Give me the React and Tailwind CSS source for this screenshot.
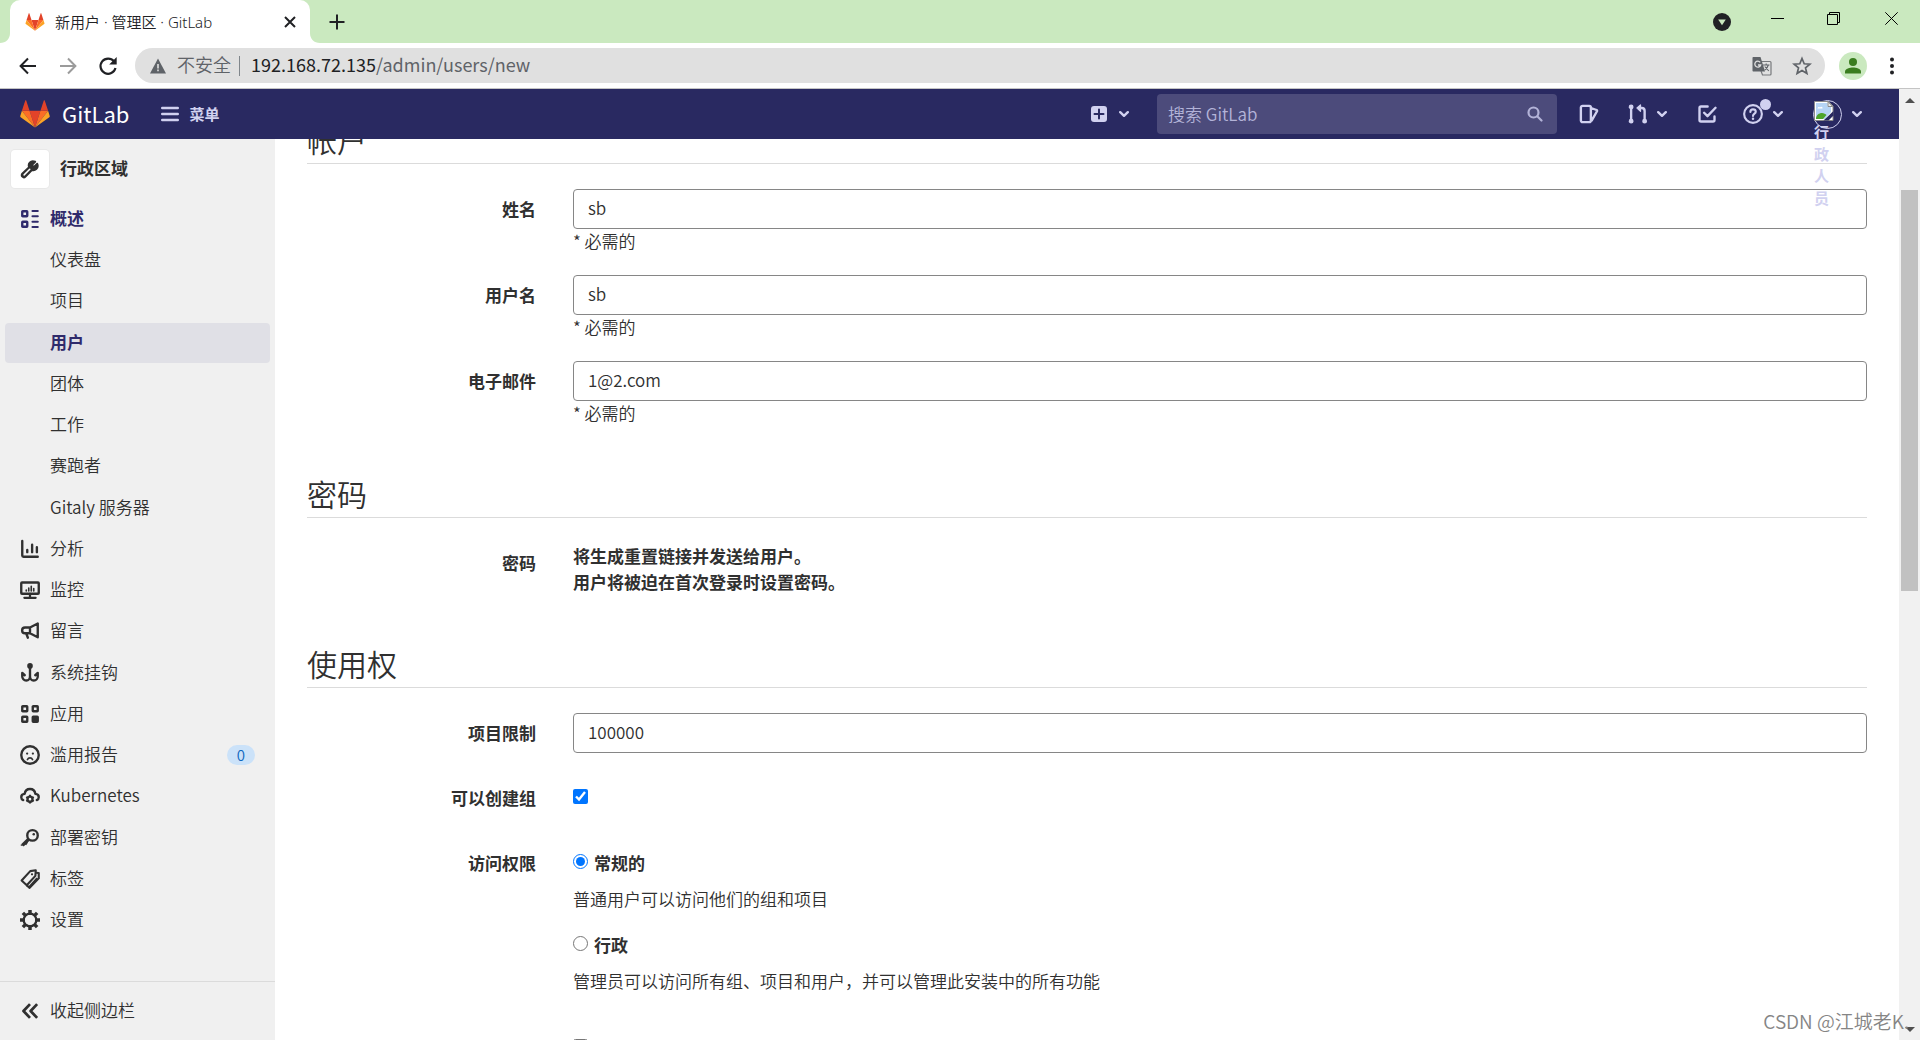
import React from "react";

const FONT = "font-['Noto_Sans_CJK_SC',sans-serif]";

function Icon({ size = "size-5", children, ...rest }) {
  return (
    <svg viewBox="0 0 16 16" className={`${size} shrink-0`} fill="none" stroke="currentColor" strokeWidth="1.9" strokeLinejoin="round" aria-hidden="true" {...rest}>
      {children}
    </svg>
  );
}

function Tanuki({ className }) {
  return (
    <svg viewBox="0 0 36 34" className={className} aria-hidden="true">
      <path fill="#e24329" d="m18 33.5 6.6-20.4H11.4z" />
      <path fill="#fc6d26" d="m18 33.5-6.6-20.4H2.1z" />
      <path fill="#fca326" d="M2.1 13.1.1 19.3c-.2.6 0 1.2.5 1.5L18 33.5z" />
      <path fill="#e24329" d="M2.1 13.1h9.3L7.4.8c-.2-.6-1.100-.6-1.300 0z" />
      <path fill="#fc6d26" d="m18 33.5 6.600-20.400h9.300z" />
      <path fill="#fca326" d="m33.900 13.100 2 6.200c.2.600 0 1.200-.5 1.500L18 33.500z" />
      <path fill="#e24329" d="M33.900 13.100h-9.300l4-12.300c.2-.6 1.100-.6 1.300 0z" />
    </svg>
  );
}

function Chevron() {
  return (
    <svg viewBox="0 0 10 10" className="size-[10px] shrink-0" fill="none" stroke="currentColor" strokeWidth="2.4" strokeLinecap="round" strokeLinejoin="round" aria-hidden="true">
      <path d="m1.200 3.200 3.800 3.600 3.800-3.600" />
    </svg>
  );
}

const gearTeeth = "M8 0v3M8 13v3M0 8h3M13 8h3M2.300 2.300l2.200 2.200M11.500 11.500l2.200 2.200M2.300 13.700l2.200-2.200M11.500 4.500l2.200-2.200";

const icons = {
  overview: (
    <Icon>
      <rect x="1.800" y="1.800" width="4" height="4" rx=".4" />
      <rect x="1.800" y="10.200" width="4" height="4" rx=".4" />
      <path strokeLinecap="round" d="M10 1.600h4.200M10 5.800h4.200M10 10.200h4.200M10 14.400h4.200" strokeWidth="1.700" />
    </Icon>
  ),
  analytics: (
    <Icon strokeLinecap="round">
      <path d="M1.800 1.500v11.700c0 .600.400 1 1 1h11.400M5.800 8.800v1.700M9.700 4.500v6M13.500 6.500v4" />
    </Icon>
  ),
  monitor: (
    <Icon>
      <rect x="1" y="2" width="14" height="9" rx=".6" />
      <path d="M8 11v2.500M3.500 14.200h9" strokeWidth="1.800" strokeLinecap="round" />
      <path d="M5 8.800V8M7 8.800V6.500M9 8.800V5M11 8.800V6.800" strokeWidth="1.300" strokeLinecap="round" />
    </Icon>
  ),
  bullhorn: (
    <Icon>
      <path d="M8 5.200 14.200 2v11L8 9.800zM8 5.200H4C2.500 5.200 1.700 6.200 1.700 7.500S2.500 9.800 4 9.800h4zM5 10l1.300 3.400" strokeLinecap="round" />
    </Icon>
  ),
  hook: (
    <Icon strokeLinecap="round">
      <circle cx="8" cy="2.300" r="1.300" fill="currentColor" />
      <path d="M8 3v7.500c0 2-1.100 3.500-3 3.500s-3.200-1.500-3.200-3.500V8l2 1.800M8 10.500c0 2 1.100 3.500 3 3.500s3.200-1.500 3.200-3.500V8l-2 1.800" />
    </Icon>
  ),
  applications: (
    <Icon>
      <rect x="1.800" y="1.800" width="4" height="4" rx=".4" />
      <rect x="10.200" y="1.800" width="4" height="4" rx=".4" />
      <rect x="1.800" y="10.200" width="4" height="4" rx=".4" />
      <rect x="10.200" y="10.200" width="4" height="4" rx=".4" fill="currentColor" />
    </Icon>
  ),
  frown: (
    <Icon>
      <circle cx="8" cy="8" r="7" />
      <circle cx="5.700" cy="6.800" r=".9" fill="currentColor" stroke="none" />
      <circle cx="10.300" cy="6.800" r=".9" fill="currentColor" stroke="none" />
      <path d="M6 11.600c.4-.9 1.100-1.300 2-1.300s1.600.4 2 1.300" strokeWidth="1.400" strokeLinecap="round" />
    </Icon>
  ),
  cloud: (
    <Icon>
      <path d="M2.600 11.300C1.500 10.800 1 9.900 1 8.900c0-1.500 1.200-2.500 2.700-2.600C4.100 3.700 5.800 2.400 8 2.400s3.900 1.300 4.300 3.900c1.500.100 2.700 1.100 2.700 2.600 0 1-.5 1.900-1.600 2.400" strokeLinecap="round" />
      <circle cx="8" cy="10.500" r="2" />
      <path d="M8 7v1.500M8 12.500V14M5 8.800l1.200.7M9.800 11.500l1.200.7M5 12.200l1.200-.7M9.800 9.500l1.200-.7" strokeWidth="1.600" />
    </Icon>
  ),
  key: (
    <Icon>
      <circle cx="10" cy="5.900" r="4.200" />
      <circle cx="11" cy="5" r="1" fill="currentColor" stroke="none" />
      <path d="M6.900 9 2 13.800M1.900 13.200v1M4 11.500l1.700 1.200" strokeWidth="2.600" />
    </Icon>
  ),
  labels: (
    <Icon strokeWidth="1.700">
      <path d="M1.300 9.200 8.200 1.700 12.600 1l-.3 4.500L5.400 13z" />
      <path d="m12.600 3 2.400.2v4.300l-7.300 7.600L5.300 13" />
      <circle cx="9.600" cy="4.200" r=".9" fill="currentColor" stroke="none" />
      <path d="m7.300 14.500 6.500-7.200" />
    </Icon>
  ),
  settings: (
    <Icon>
      <circle cx="8" cy="8" r="5" strokeWidth="2" />
      <path d={gearTeeth} strokeWidth="2.800" />
      <circle cx="8" cy="8" r="4" fill="#f0f0f0" stroke="none" />
    </Icon>
  ),
};

const navItems = [
  { label: "概述", icon: "overview", active: true },
  { label: "仪表盘" },
  { label: "项目" },
  { label: "用户", current: true },
  { label: "团体" },
  { label: "工作" },
  { label: "赛跑者" },
  { label: "Gitaly 服务器" },
  { label: "分析", icon: "analytics" },
  { label: "监控", icon: "monitor" },
  { label: "留言", icon: "bullhorn" },
  { label: "系统挂钩", icon: "hook" },
  { label: "应用", icon: "applications" },
  { label: "滥用报告", icon: "frown", badge: "0" },
  { label: "Kubernetes", icon: "cloud" },
  { label: "部署密钥", icon: "key" },
  { label: "标签", icon: "labels" },
  { label: "设置", icon: "settings" },
];

function TabStrip() {
  return (
    <div className="flex h-[43px] shrink-0 bg-[#cae9bf]">
      <svg viewBox="0 0 10 10" className="size-[10px] self-end" fill="#fff" aria-hidden="true"><path d="M10 0v10H0C6 10 10 6 10 0z" /></svg>
      <div className="flex w-[300px] items-center rounded-t-[10px] bg-white pl-[15px] pr-[13px] text-[#202124]">
        <Tanuki className="h-[18px] w-5 shrink-0" />
        <span className="ml-[10px] flex-1 truncate font-['Noto_Sans','Noto_Sans_CJK_SC',sans-serif] text-[15px] leading-6">新用户 · 管理区 · GitLab</span>
        <button type="button" aria-label="关闭标签页">
          <svg viewBox="0 0 14 14" className="size-[14px]" fill="none" stroke="currentColor" strokeWidth="2"><path d="m2 2 10 10M12 2 2 12" /></svg>
        </button>
      </div>
      <svg viewBox="0 0 10 10" className="size-[10px] self-end" fill="#fff" aria-hidden="true"><path d="M0 0v10h10C4 10 0 6 0 0z" /></svg>
      <button type="button" aria-label="新标签页" className="ml-[9px] text-[#202124]">
        <svg viewBox="0 0 16 16" className="size-4" fill="none" stroke="currentColor" strokeWidth="2"><path d="M8 .5v15M.5 8h15" /></svg>
      </button>
      <div className="ml-auto flex items-start gap-[43px] pr-[22px] pt-3 text-black">
        <button type="button" aria-label="搜索标签页" className="-mr-[3px] pt-px">
          <svg viewBox="0 0 18 18" className="size-[18px]"><circle cx="9" cy="9" r="9" fill="#202124" /><path d="M5.200 6.500h7.600L9 12.300z" fill="#cae9bf" /></svg>
        </button>
        <button type="button" aria-label="最小化">
          <svg viewBox="0 0 13 13" className="size-[13px]" stroke="currentColor"><path d="M0 6.500h13" /></svg>
        </button>
        <button type="button" aria-label="还原">
          <svg viewBox="0 0 13 13" className="size-[13px]" stroke="currentColor" fill="none"><path d="M.5 2.500h10v10H.5zM2.500 2.500v-2h10v10h-2" /></svg>
        </button>
        <button type="button" aria-label="关闭" className="ml-0.5">
          <svg viewBox="0 0 13 13" className="size-[13px]" stroke="currentColor" fill="none"><path d="m.3.300 12.400 12.400M12.700.300.3 12.700" /></svg>
        </button>
      </div>
    </div>
  );
}

function AddressBar() {
  return (
    <div className="flex h-[46px] shrink-0 items-center border-b border-[#c4c4c4] bg-white pl-[18px] pr-6 text-[#202124]">
      <button type="button" aria-label="后退">
        <svg viewBox="0 0 20 20" className="size-5" fill="none" stroke="currentColor" strokeWidth="2"><path d="M18 10H3M10 2.500 2.600 10l7.400 7.500" /></svg>
      </button>
      <button type="button" aria-label="前进" className="ml-5 text-[#9b9b9b]">
        <svg viewBox="0 0 20 20" className="size-5" fill="none" stroke="currentColor" strokeWidth="2"><path d="M2 10h15M10 2.500l7.400 7.500-7.400 7.500" /></svg>
      </button>
      <button type="button" aria-label="重新加载" className="ml-5">
        <svg viewBox="0 0 20 20" className="size-5" fill="none" stroke="currentColor" strokeWidth="2.200"><path d="M16 5.300A7.600 7.600 0 1 0 17.500 12" /><path d="M18.700 1v7.500h-7.500z" fill="currentColor" stroke="none" /></svg>
      </button>
      <div className="ml-[17px] flex h-[35px] flex-1 items-center rounded-full bg-[#e0e0e0] pl-[15px] pr-[13px] text-[18px] leading-6 text-[#5f6368]">
        <svg viewBox="0 0 16 16" className="size-4" fill="currentColor"><path d="M8 .5 16 15.500H0z" /><path d="M7.200 6h1.600v4.500H7.200zM7.200 11.500h1.600v1.700H7.200z" fill="#e0e0e0" /></svg>
        <span className="ml-[11px] pb-[3px]">不安全</span>
        <span className="ml-2 h-5 w-px bg-[#80868b]" />
        <span role="textbox" aria-label="地址" className="ml-[11px] flex-1 pb-[3px] font-normal"><span className="text-[#202124]">192.168.72.135</span>/admin/users/new</span>
        <button type="button" aria-label="翻译此页">
          <svg viewBox="0 0 20 20" className="size-5" fill="none">
            <path d="M9 5.500h9c.6 0 1 .4 1 1V18c0 .6-.4 1-1 1h-7.500L9 15" stroke="#77797c" strokeWidth="1.200" />
            <path d="M1.500 1h7L13 15.500H1.500c-.6 0-1-.4-1-1V2c0-.6.4-1 1-1z" fill="#5f6368" />
            <path d="M8.200 6.300A3 3 0 1 0 8.700 9H6" stroke="#e0e0e0" strokeWidth="1.300" />
            <path d="M11 9h6.500M14.200 7.500V9M16.300 9c-.6 2.200-2 4-3.500 5M12.800 10.500l4 4.500" stroke="#5f6368" strokeWidth="1.100" />
          </svg>
        </button>
        <button type="button" aria-label="添加书签" className="ml-5">
          <svg viewBox="0 0 20 20" className="size-5" fill="none" stroke="currentColor" strokeWidth="1.700"><path d="m10 2.500 2.200 5.300 5.700.4-4.400 3.700 1.400 5.600-4.900-3-4.900 3 1.400-5.600L2.100 8.200l5.700-.4z" /></svg>
        </button>
      </div>
      <button type="button" aria-label="用户资料" className="ml-[14px] flex size-7 items-center justify-center rounded-full bg-[#cae9bf]">
        <svg viewBox="0 0 16 16" className="size-4" fill="#3a7d1f"><circle cx="8" cy="4" r="4" /><path d="M0 15.500v-2C0 10.800 5 9.600 8 9.600s8 1.200 8 3.900v2z" /></svg>
      </button>
      <button type="button" aria-label="菜单" className="ml-[21px]">
        <svg viewBox="0 0 8 18" className="h-[18px] w-2" fill="currentColor"><circle cx="4" cy="2.500" r="2" /><circle cx="4" cy="9" r="2" /><circle cx="4" cy="15.500" r="2" /></svg>
      </button>
    </div>
  );
}

function NavBar() {
  return (
    <header className="relative z-10 flex h-[50px] shrink-0 items-center bg-[#292961] pl-5 pr-[37px] text-[#d1d1f0]">
      <a href="#home" className="flex items-center text-white">
        <Tanuki className="h-[28px] w-[30px]" />
        <span className="ml-3 pb-0.5 text-[22px] font-normal leading-8">GitLab</span>
      </a>
      <button type="button" className="ml-8 flex items-center gap-[10px] text-[15px] font-bold leading-6">
        <svg viewBox="0 0 18 16" className="h-4 w-[18px]" stroke="currentColor" strokeWidth="2.400" strokeLinecap="round"><path d="M1.200 2h15.600M1.200 8h15.600M1.200 14h15.600" /></svg>
        菜单
      </button>
      <button type="button" aria-label="新建" className="ml-auto flex items-center gap-3">
        <svg viewBox="0 0 16 16" className="size-4"><rect width="16" height="16" rx="3" fill="currentColor" /><path d="M8 3.500v9M3.500 8h9" stroke="#292961" strokeWidth="2" strokeLinecap="round" /></svg>
        <Chevron />
      </button>
      <label className="ml-7 flex h-10 w-[400px] items-center rounded-[4px] bg-[#4c4b7b] pl-[11px] pr-[14px] text-[#b3b3d8]">
        <input type="text" aria-label="搜索" placeholder="搜索 GitLab" className="min-w-0 flex-1 bg-transparent text-[17px] leading-6 outline-none placeholder:text-[#b3b3d8]" />
        <Icon size="size-4" strokeWidth="2.200" strokeLinecap="round"><circle cx="6.500" cy="6.500" r="5" /><path d="m10.500 10.500 4 4" /></Icon>
      </label>
      <a href="#issues" aria-label="议题" className="ml-[22px]">
        <Icon><path d="M2.800 1.500h5.400c.7 0 1.300.6 1.300 1.300v10.400c0 .7-.6 1.300-1.300 1.300H2.800c-.7 0-1.300-.6-1.300-1.300V2.800c0-.7.600-1.300 1.300-1.300zM9.700 3.200l4.300 1.600c.4.100.6.600.4 1L10 13.500" /></Icon>
      </a>
      <button type="button" aria-label="合并请求" className="ml-[29px] flex items-center gap-[9px]">
        <Icon><circle cx="2.500" cy="2.300" r="1" fill="currentColor" /><circle cx="2.500" cy="13.700" r="1" fill="currentColor" /><path d="M2.500 3v10" /><path d="M9 3.200h2c1.300 0 2.300 1 2.300 2.300V13" /><circle cx="13.300" cy="13.700" r="1" fill="currentColor" /><path d="M10 .8v5L7.200 3.200z" fill="currentColor" strokeWidth="1" /></Icon>
        <Chevron />
      </button>
      <a href="#todos" aria-label="待办事项" className="ml-[30px]">
        <Icon strokeLinecap="round"><path d="M8.500 2H3.200C2.500 2 2 2.500 2 3.200v9.600c0 .7.500 1.200 1.200 1.200h9.600c.7 0 1.200-.5 1.200-1.200V10M5.700 7l2.700 2.700L14.800 3" /></Icon>
      </a>
      <button type="button" aria-label="帮助" className="relative ml-[26px] flex items-center gap-[10px]">
        <Icon strokeWidth="1.700"><circle cx="8" cy="8" r="7.100" /><path d="M5.900 6.300c0-1.200.9-2 2.100-2s2.200.8 2.200 1.900C10.200 7.700 8 7.800 8 9.500" strokeLinecap="round" /><circle cx="8" cy="11.800" r="1" fill="currentColor" stroke="none" /></Icon>
        <span className="absolute -top-[5px] left-[17px] size-[11px] rounded-full bg-[#d1d1f0]" />
        <Chevron />
      </button>
      <button type="button" aria-label="用户菜单" className="ml-[30px] flex items-center gap-[10px]">
        <span className="relative size-[29px] rounded-full border border-[#d1d1f0]">
          <svg viewBox="0 0 20 20" className="absolute left-0 top-0 size-5">
            <path d="M.5.500h14L19 5v14.500H.5z" fill="#fff" stroke="#8a8a8a" />
            <path d="M2 2h11.500v3.500H17V11l-6 7H2z" fill="#b6d4f5" />
            <path d="M3.500 7.500c0-1.500 2-2 2.500-1 1-1.500 3-.5 2.500 1z" fill="#fff" />
            <path d="M2 18c0-4 3-6 6-6 2 0 3.500 1 4.500 2L9 18z" fill="#4ea52c" />
            <path d="M19.500 10 9.500 19.500h5l5-5z" fill="#292961" />
            <path d="M14 .8V5.500h4.700z" fill="#eee" stroke="#8a8a8a" />
          </svg>
          <span className="absolute left-0 top-5 w-[15px] break-all text-[15px] font-bold leading-[22px]">行政人员</span>
        </span>
        <Chevron />
      </button>
    </header>
  );
}

function Sidebar() {
  return (
    <nav aria-label="管理区" className="flex w-[275px] shrink-0 flex-col bg-[#f0f0f0] text-[17px] leading-6 text-[#303030]">
      <a href="#admin" className="flex items-center py-[11px] pl-[11px] font-bold">
        <span className="flex size-[38px] items-center justify-center rounded-[4px] bg-white shadow-[0_0_0_1px_#e8e8e8]">
          <Icon><path d="M13.800 3.800 11.500 6 10 5.800 9.900 4.400l2.200-2.200C10.500 1.500 8.800 1.800 7.800 3 6.900 4 6.800 5.300 7.300 6.500L2 11.600c-.8.800-.8 1.800-.1 2.500s1.700.7 2.500-.1L9.500 8.800c1.200.4 2.500.2 3.500-.7 1.100-1.100 1.400-2.800.8-4.300z" strokeWidth="1.600" fill="currentColor" /><path d="m7.800 8.200-4.500 4.500" strokeWidth="1.200" strokeLinecap="round" stroke="#fff" /></Icon>
        </span>
        <span className="ml-[11px] pb-0.5">行政区域</span>
      </a>
      <ul className="mb-[41px] flex flex-1 flex-col justify-between">
        {navItems.map((item) => (
          <li key={item.label} className="px-[5px]">
            <a
              href={`#${item.label}`}
              className={
                item.current
                  ? "flex h-10 items-center rounded-[4px] bg-[#e0e0e6] pl-[45px] font-bold text-[#2f2a6b]"
                  : item.icon
                    ? `flex h-10 items-center pl-[15px] pr-[15px] ${item.active ? "font-bold text-[#2f2a6b]" : ""}`
                    : "flex h-10 items-center pl-[45px]"
              }
            >
              {item.icon && icons[item.icon]}
              <span className={item.icon ? "ml-[10px] pb-0.5" : "pb-0.5"}>{item.label}</span>
              {item.badge && (
                <span className="ml-auto rounded-full bg-[#cbe2f9] px-[10px] text-[15px] leading-5 text-[#1068bf]">{item.badge}</span>
              )}
            </a>
          </li>
        ))}
      </ul>
      <button type="button" className="flex h-[59px] items-center border-t border-[#dbdbdb] pl-5 text-left">
        <Icon strokeWidth="2.200"><path d="M8 2.500 2.800 8 8 13.500M13.700 2.500 8.500 8l5.200 5.500" /></Icon>
        <span className="ml-[10px] pb-0.5">收起侧边栏</span>
      </button>
    </nav>
  );
}

function Heading({ children }) {
  return <h2 className="border-b border-[#dbdbdb] pb-[9px] text-[30px] leading-[30px]">{children}</h2>;
}

const LABEL = "w-[229px] shrink-0 pt-2 text-right font-bold leading-6";

function Field({ id, label, value, hint }) {
  return (
    <div className="flex gap-[37px]">
      <label htmlFor={id} className={LABEL}>{label}</label>
      <div className="flex-1">
        <input id={id} type="text" defaultValue={value} className="block h-10 w-full rounded-[4px] border border-[#868686] bg-white px-[14px] pb-[3px] text-[17px] leading-6 outline-none" />
        {hint && <p className="h-[46px]">{hint}</p>}
      </div>
    </div>
  );
}

function Access({ id, label, text, checked }) {
  return (
    <div>
      <div className="flex h-6 items-start gap-[6px]">
        <input id={id} name="access" type="radio" defaultChecked={checked} className="mt-[3px] size-[15px] accent-[#0075ff]" />
        <label htmlFor={id} className="font-bold leading-6">{label}</label>
      </div>
      <p className="mt-3 leading-6">{text}</p>
    </div>
  );
}

function UserForm() {
  return (
    <main className="h-full min-w-0 flex-1 overflow-hidden bg-white text-[17px] leading-6 text-[#303030]">
      <form className="-mt-[15px] ml-8 mr-8">
        <Heading>帐户</Heading>
        <div className="mt-[25px]">
          <Field id="name" label="姓名" value="sb" hint="* 必需的" />
          <Field id="username" label="用户名" value="sb" hint="* 必需的" />
          <Field id="email" label="电子邮件" value="1@2.com" hint="* 必需的" />
        </div>
        <div className="mt-[31px]"><Heading>密码</Heading></div>
        <div className="mt-[25px] flex gap-[37px]">
          <span className={LABEL}>密码</span>
          <p className="font-bold leading-[26px]">将生成重置链接并发送给用户。<br />用户将被迫在首次登录时设置密码。</p>
        </div>
        <div className="mt-[53px]"><Heading>使用权</Heading></div>
        <div className="mt-[25px]"><Field id="limit" label="项目限制" value="100000" /></div>
        <div className="mt-[25px] flex gap-[37px]">
          <label htmlFor="groups" className={LABEL}>可以创建组</label>
          <input id="groups" type="checkbox" defaultChecked className="mt-[11px] size-[15px] accent-[#0075ff]" />
        </div>
        <div className="mt-[33px] flex gap-[37px]">
          <span className={LABEL}>访问权限</span>
          <div className="flex flex-col gap-[22px] pt-2">
            <Access id="regular" label="常规的" text="普通用户可以访问他们的组和项目" checked />
            <Access id="admin" label="行政" text="管理员可以访问所有组、项目和用户，并可以管理此安装中的所有功能" />
          </div>
        </div>
        <div className="mt-[46px] flex pl-[266px]">
          <input type="checkbox" aria-label="外部的" className="size-[15px]" />
        </div>
      </form>
    </main>
  );
}

function ScrollBar() {
  return (
    <div aria-hidden="true" className="flex w-[21px] shrink-0 flex-col items-center bg-[#f1f1f1] pb-2 pt-[9px] text-[#505050]">
      <svg viewBox="0 0 10 5" className="h-[5px] w-[10px]" fill="currentColor"><path d="M5 0l5 5H0z" /></svg>
      <div className="mt-[87px] h-[401px] w-[17px] bg-[#c1c1c1]" />
      <svg viewBox="0 0 10 5" className="mt-auto h-[5px] w-[10px]" fill="currentColor"><path d="M0 0h10L5 5z" /></svg>
    </div>
  );
}

export default function App() {
  return (
    <div className={`relative flex h-screen flex-col overflow-hidden bg-white font-[350] ${FONT}`}>
      <TabStrip />
      <AddressBar />
      <div className="flex min-h-0 flex-1">
        <div className="flex min-w-0 flex-1 flex-col">
          <NavBar />
          <div className="flex min-h-0 flex-1">
            <Sidebar />
            <UserForm />
          </div>
        </div>
        <ScrollBar />
      </div>
      <span className="absolute bottom-[5px] right-[11px] text-[19px] leading-7 text-[#858585]">CSDN @江城老K.</span>
    </div>
  );
}
